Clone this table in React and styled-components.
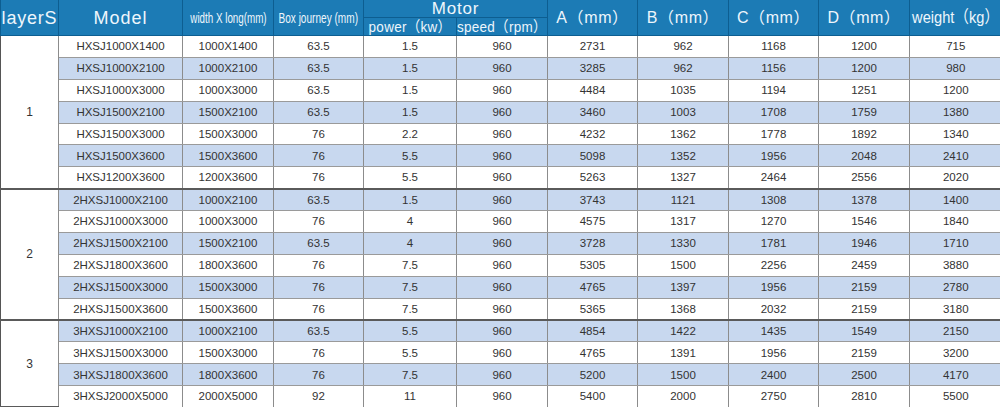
import React from "react";
import styled, { createGlobalStyle } from "styled-components";

const Global = createGlobalStyle`
  html, body { margin: 0; padding: 0; background: #ffffff; }
  body { font-family: "Liberation Sans", Arial, sans-serif; }
`;

const COLS = [58, 124, 91, 90, 93, 91, 90, 91, 90, 91, 92];

const groups = [
  {
    layer: "1",
    rows: [
      ["HXSJ1000X1400", "1000X1400", "63.5", "1.5", "960", "2731", "962", "1168", "1200", "715"],
      ["HXSJ1000X2100", "1000X2100", "63.5", "1.5", "960", "3285", "962", "1156", "1200", "980"],
      ["HXSJ1000X3000", "1000X3000", "63.5", "1.5", "960", "4484", "1035", "1194", "1251", "1200"],
      ["HXSJ1500X2100", "1500X2100", "63.5", "1.5", "960", "3460", "1003", "1708", "1759", "1380"],
      ["HXSJ1500X3000", "1500X3000", "76", "2.2", "960", "4232", "1362", "1778", "1892", "1340"],
      ["HXSJ1500X3600", "1500X3600", "76", "5.5", "960", "5098", "1352", "1956", "2048", "2410"],
      ["HXSJ1200X3600", "1200X3600", "76", "5.5", "960", "5263", "1327", "2464", "2556", "2020"],
    ],
  },
  {
    layer: "2",
    rows: [
      ["2HXSJ1000X2100", "1000X2100", "63.5", "1.5", "960", "3743", "1121", "1308", "1378", "1400"],
      ["2HXSJ1000X3000", "1000X3000", "76", "4", "960", "4575", "1317", "1270", "1546", "1840"],
      ["2HXSJ1500X2100", "1500X2100", "63.5", "4", "960", "3728", "1330", "1781", "1946", "1710"],
      ["2HXSJ1800X3600", "1800X3600", "76", "7.5", "960", "5305", "1500", "2256", "2459", "3880"],
      ["2HXSJ1500X3000", "1500X3000", "76", "7.5", "960", "4765", "1397", "1956", "2159", "2780"],
      ["2HXSJ1500X3600", "1500X3600", "76", "7.5", "960", "5365", "1368", "2032", "2159", "3180"],
    ],
  },
  {
    layer: "3",
    rows: [
      ["3HXSJ1000X2100", "1000X2100", "63.5", "5.5", "960", "4854", "1422", "1435", "1549", "2150"],
      ["3HXSJ1500X3000", "1500X3000", "76", "5.5", "960", "4765", "1391", "1956", "2159", "3200"],
      ["3HXSJ1800X3600", "1800X3600", "76", "7.5", "960", "5200", "1500", "2400", "2500", "4170"],
      ["3HXSJ2000X5000", "2000X5000", "92", "11", "960", "5400", "2000", "2750", "2810", "5500"],
    ],
  },
];

const Table = styled.table`
  width: 1000px;
  border-collapse: collapse;
  table-layout: fixed;
  border-spacing: 0;
`;

const HeadRow = styled.tr`
  height: ${(p) => p.$h}px;
`;

const Th = styled.th`
  background: #1c7bb5;
  color: #eef6fc;
  font-weight: normal;
  padding: 0;
  text-align: center;
  vertical-align: middle;
  white-space: nowrap;
  overflow: hidden;
  border: 1px solid #0d5e91;
  border-top: none;
  font-family: "Liberation Sans", "Noto Sans CJK SC", sans-serif;
  font-size: ${(p) => p.$size || 17}px;
  letter-spacing: ${(p) => p.$ls ?? 0.6}px;
  line-height: 1;
  &:first-child { border-left: 1px solid #0d5e91; }
  &:last-child { border-right: none; }
`;

const Squeeze = styled.div`
  display: flex;
  justify-content: center;
  width: 100%;
`;

const SqueezeText = styled.span`
  display: inline-block;
  flex: none;
  transform: scaleX(${(p) => p.$x});
  transform-origin: center;
`;

const BodyRow = styled.tr`
  height: 21.88px;
  background: ${(p) => (p.$alt ? "#c8d8ef" : "#ffffff")};
`;

const Td = styled.td`
  padding: 0;
  text-align: center;
  vertical-align: middle;
  white-space: nowrap;
  font-size: 11.5px;
  color: #333333;
  border-left: 1px solid #8c8c8c;
  border-right: 1px solid #8c8c8c;
  border-top: ${(p) =>
    p.$first ? "none" : p.$groupStart ? "2px solid #5a5a5a" : "1px solid #9a9a9a"};
  border-bottom: 1px solid #9a9a9a;
  &:last-child { border-right: none; }
`;

const LayerTd = styled.td`
  padding: 0;
  background: #ffffff;
  text-align: center;
  vertical-align: middle;
  font-size: 12px;
  color: #333333;
  border-left: 1px solid #555555;
  border-right: 1px solid #8c8c8c;
  border-top: ${(p) => (p.$first ? "none" : "2px solid #5a5a5a")};
  border-bottom: 2px solid #5a5a5a;
`;

const Narrow = ({ x, children }) => (
  <Squeeze>
    <SqueezeText $x={x}>{children}</SqueezeText>
  </Squeeze>
);

export default function App() {
  let idx = 0;
  return (
    <>
      <Global />
      <Table>
        <colgroup>
          {COLS.map((w, i) => (
            <col key={i} style={{ width: w }} />
          ))}
        </colgroup>
        <thead>
          <HeadRow $h={17}>
            <Th rowSpan={2} $size={18} $ls={0.8}>layerS</Th>
            <Th rowSpan={2} $size={18} $ls={1}>Model</Th>
            <Th rowSpan={2} $size={14} $ls={0}>
              <Narrow x={0.7}>width X long(mm)</Narrow>
            </Th>
            <Th rowSpan={2} $size={14} $ls={0}>
              <Narrow x={0.72}>Box journey (mm)</Narrow>
            </Th>
            <Th colSpan={2} $size={17} $ls={0.8}>Motor</Th>
            <Th rowSpan={2} $size={16} $ls={0.6}>A（mm）</Th>
            <Th rowSpan={2} $size={16} $ls={0.6}>B（mm）</Th>
            <Th rowSpan={2} $size={16} $ls={0.6}>C（mm）</Th>
            <Th rowSpan={2} $size={16} $ls={0.6}>D（mm）</Th>
            <Th rowSpan={2} $size={17} $ls={0}>
              <Narrow x={0.86}>weight（kg）</Narrow>
            </Th>
          </HeadRow>
          <HeadRow $h={18}>
            <Th $size={15} $ls={0.3}>
              <Narrow x={0.9}>power（kw）</Narrow>
            </Th>
            <Th $size={15} $ls={0.3}>
              <Narrow x={0.9}>speed（rpm）</Narrow>
            </Th>
          </HeadRow>
        </thead>
        <tbody>
          {groups.map((g, gi) =>
            g.rows.map((r, ri) => {
              const alt = idx % 2 === 1;
              idx += 1;
              const first = gi === 0 && ri === 0;
              return (
                <BodyRow key={g.layer + ri} $alt={alt}>
                  {ri === 0 && (
                    <LayerTd rowSpan={g.rows.length} $first={first}>
                      {g.layer}
                    </LayerTd>
                  )}
                  {r.map((c, ci) => (
                    <Td key={ci} $groupStart={ri === 0} $first={first}>
                      {c}
                    </Td>
                  ))}
                </BodyRow>
              );
            })
          )}
        </tbody>
      </Table>
    </>
  );
}
